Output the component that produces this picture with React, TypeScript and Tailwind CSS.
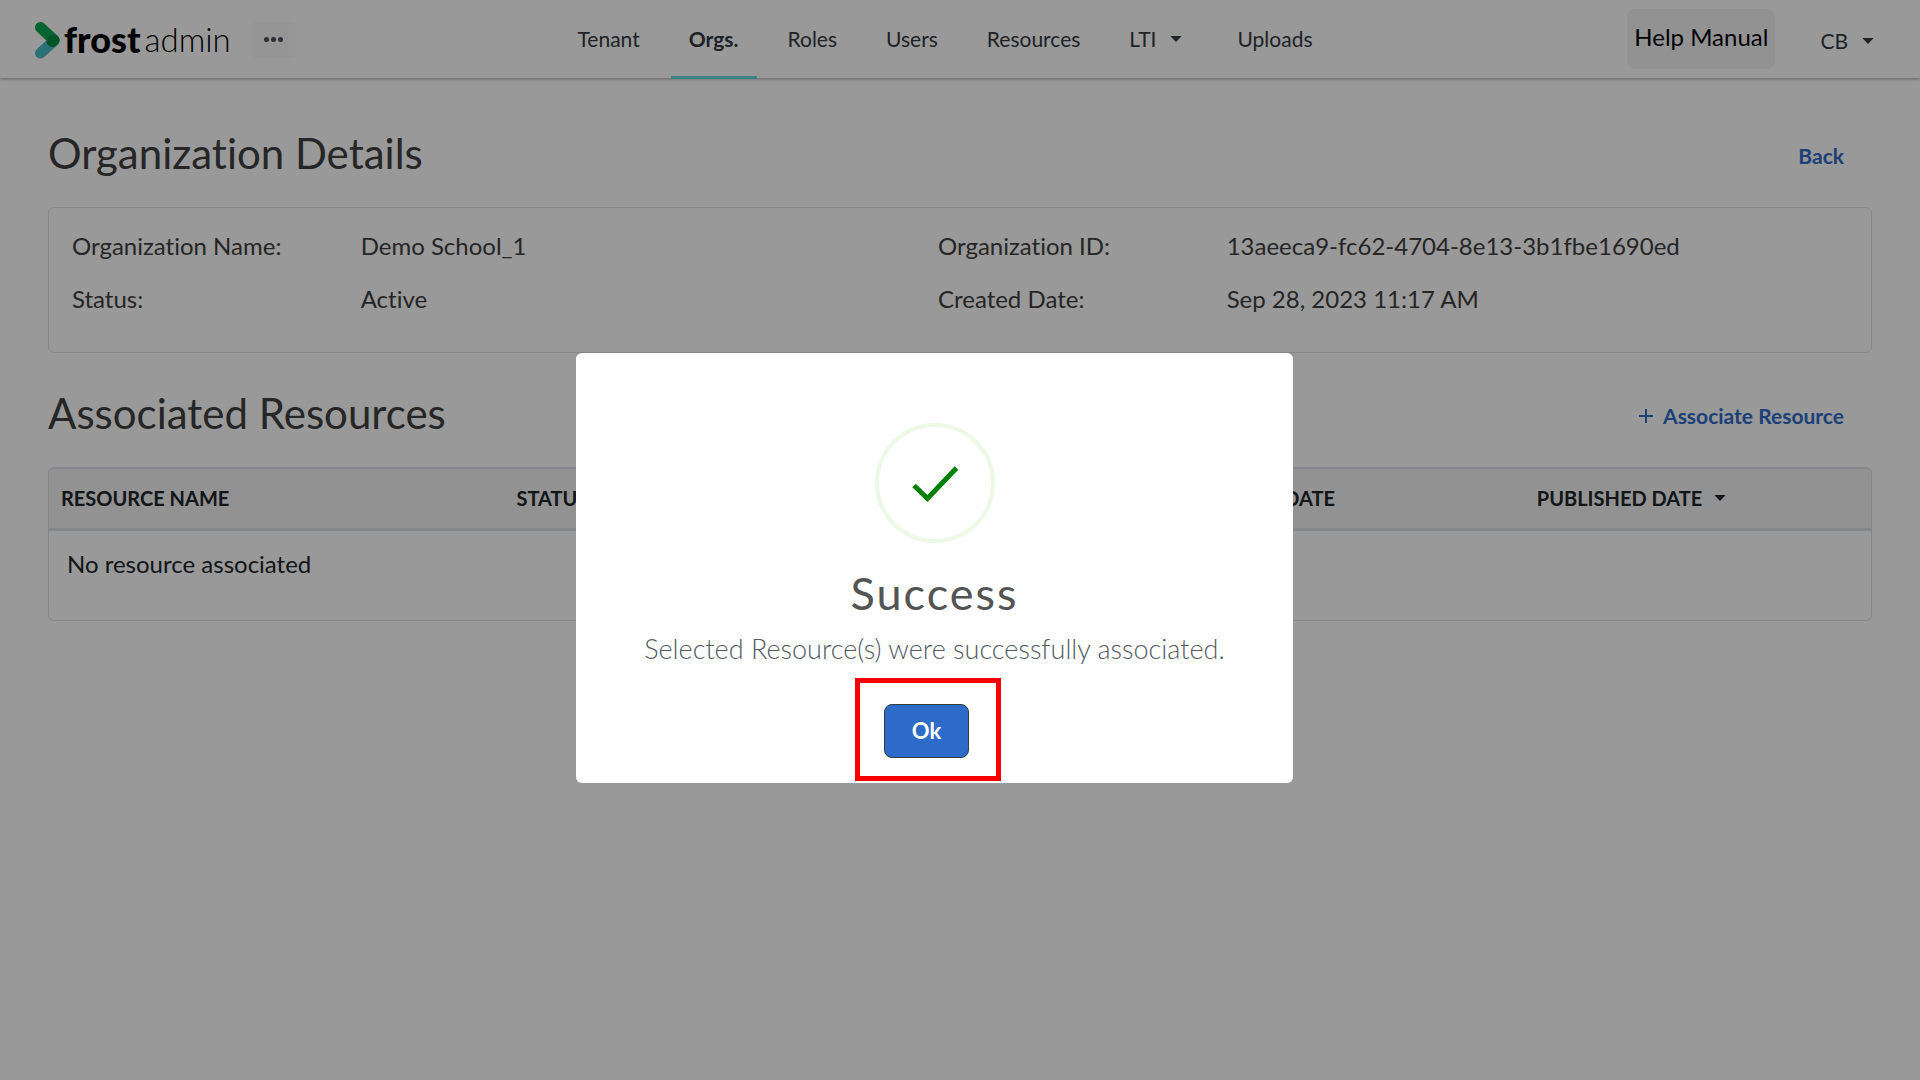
import React from 'react';

const navItems = [
  { label: 'Tenant' },
  { label: 'Orgs.', active: true },
  { label: 'Roles' },
  { label: 'Users' },
  { label: 'Resources' },
  { label: 'LTI', caret: true },
  { label: 'Uploads' },
];

const details = [
  { label: 'Organization Name:', value: 'Demo School_1' },
  { label: 'Organization ID:', value: '13aeeca9-fc62-4704-8e13-3b1fbe1690ed' },
  { label: 'Status:', value: 'Active' },
  { label: 'Created Date:', value: 'Sep 28, 2023 11:17 AM' },
];

const Caret: React.FC = () => (
  <svg width="12" height="6" viewBox="0 0 12 6" fill="currentColor" aria-hidden="true">
    <path d="M0.4 0h11.2L6 6z" />
  </svg>
);

const Logo: React.FC = () => (
  <a href="#" className="flex items-center text-black">
    <svg width="27" height="38" viewBox="0 0 27 38" fill="none" strokeLinecap="round" strokeWidth="11" aria-hidden="true">
      <path d="M6.500 32 20 20" stroke="#4bbcc8" />
      <path d="M6.500 6.500 20 19" stroke="#00a651" />
      <path d="M18 20.500 20 19" stroke="#008c40" />
    </svg>
    <span className="ml-[3px] pb-0.5 text-[36px] leading-10 font-black">frost</span>
    <span className="ml-1 pb-0.5 text-[33px] leading-10 font-light">admin</span>
  </a>
);

const Header: React.FC = () => (
  <header className="grid h-[78px] grid-cols-[1fr_auto_1fr] items-center bg-white shadow-[0_1px_3px_rgba(0,0,0,0.35)]">
    <div className="flex items-center gap-[22px] pl-[34px]">
      <Logo />
      <button type="button" aria-label="More" className="flex h-9 w-[42px] items-center justify-center gap-[2px] rounded-sm bg-[#f8f9fa]">
        <span className="size-[5px] rounded-full bg-[#495057]" />
        <span className="size-[5px] rounded-full bg-[#495057]" />
        <span className="size-[5px] rounded-full bg-[#495057]" />
      </button>
    </div>

    <nav className="flex h-full gap-[13px] pr-[30px] text-[21px] text-[#343a40]">
      {navItems.map((item) => (
        <a
          key={item.label}
          href="#"
          className={
            item.active
              ? 'flex h-[79px] items-center border-b-[3px] border-[#63dbdf] px-[18px] pt-px font-bold'
              : item.caret
                ? 'flex h-[79px] items-center gap-[14px] pr-6 pb-0.5 pl-[18px]'
                : 'flex h-[79px] items-center px-[18px] pb-0.5'
          }
        >
          {item.label}
          {item.caret && <Caret />}
        </a>
      ))}
    </nav>

    <div className="flex h-full items-center justify-end pr-[46px] pb-0.5">
      <button type="button" className="mr-[45px] h-[60px] rounded-lg bg-[#f4f4f4] px-[7px] pb-1 text-2xl text-black">
        Help Manual
      </button>
      <button type="button" className="flex items-center gap-[14px] pt-1 text-[21px] text-[#343a40]">
        CB
        <Caret />
      </button>
    </div>
  </header>
);

const OrganizationDetails: React.FC = () => (
  <section>
    <div className="flex h-[54px] items-start justify-between pr-7">
      <h1 className="text-[42px] leading-[48px]">Organization Details</h1>
      <a href="#" className="self-center text-[21px] font-bold text-[#2f6bc6]">
        Back
      </a>
    </div>
    <dl className="mt-6 grid h-[146px] grid-cols-2 content-start gap-y-[17px] rounded-md border border-[#dee2e6] pt-5 pr-[67px] pl-[23px] text-2xl leading-9">
      {details.map((item) => (
        <div key={item.label} className="grid grid-cols-3">
          <dt>{item.label}</dt>
          <dd className="col-span-2">{item.value}</dd>
        </div>
      ))}
    </dl>
  </section>
);

const AssociatedResources: React.FC = () => (
  <section className="mt-9">
    <div className="flex h-[54px] items-start justify-between pr-7">
      <h2 className="text-[42px] leading-[48px]">Associated Resources</h2>
      <button type="button" className="flex items-center gap-[10px] self-center text-[21px] font-bold text-[#2f6bc6]">
        <svg width="14" height="14" viewBox="0 0 14 14" stroke="currentColor" strokeWidth="2" aria-hidden="true">
          <path d="M7 0v14M0 7h14" />
        </svg>
        Associate Resource
      </button>
    </div>
    <div className="mt-6 overflow-hidden rounded-md border border-t-2 border-[#dee2e6]">
      <table className="w-full table-fixed text-left text-[#212529]">
        <thead className="border-b-[3px] border-[#dee2e6] bg-[#f4f4f4]">
          <tr className="h-[60px] text-xl font-bold">
            <th scope="col" className="w-[25%] pl-3">RESOURCE NAME</th>
            <th scope="col" className="w-[37%] pl-3">STATUS</th>
            <th scope="col" className="w-[19%] pl-3">CREATED DATE</th>
            <th scope="col" className="w-[19%] pl-3">
              <button type="button" className="flex items-center gap-3">
                PUBLISHED DATE
                <Caret />
              </button>
            </th>
          </tr>
        </thead>
        <tbody>
          <tr className="h-[91px] align-top text-2xl">
            <td colSpan={4} className="pt-[17px] pl-[18px]">No resource associated</td>
          </tr>
        </tbody>
      </table>
    </div>
  </section>
);

const SuccessDialog: React.FC = () => (
  <div className="fixed inset-0 flex items-center justify-center bg-black/40 pt-14 pr-[51px]">
    <div role="dialog" aria-modal="true" aria-labelledby="dialog-title" className="flex w-[717px] flex-col items-center rounded-md bg-white pt-[70px] pb-[25px]">
      <svg width="120" height="120" viewBox="0 0 120 120" fill="none" aria-hidden="true">
        <circle cx="60" cy="60" r="58" stroke="#edf8e7" strokeWidth="4" />
        <path d="M39 62.500 52.500 75.500 81.500 45" stroke="#008000" strokeWidth="5" />
      </svg>
      <h2 id="dialog-title" className="mt-[23px] text-[45px] leading-[54px] tracking-[2px] text-[#545454]">
        Success
      </h2>
      <p className="mt-[9px] text-[27px] leading-10 font-light text-[#545b62]">
        Selected Resource(s) were successfully associated.
      </p>
      <div className="relative mt-[35px] mr-4">
        <button type="button" className="h-[54px] w-[85px] rounded-lg border border-[#343a40] bg-[#2d6bc8] pb-0.5 text-[22px] font-bold text-white">
          Ok
        </button>
        <div className="pointer-events-none absolute -top-[26px] -right-8 -bottom-[23px] -left-[29px] border-[5px] border-[#fa0000]" />
      </div>
    </div>
  </div>
);

const App: React.FC = () => {
  return (
    <div className="min-h-screen bg-white font-['Lato',sans-serif] text-[#404040] [font-variant-ligatures:none]">
      <Header />
      <main className="px-12 pt-[51px]">
        <OrganizationDetails />
        <AssociatedResources />
      </main>
      <SuccessDialog />
    </div>
  );
};

export default App;
